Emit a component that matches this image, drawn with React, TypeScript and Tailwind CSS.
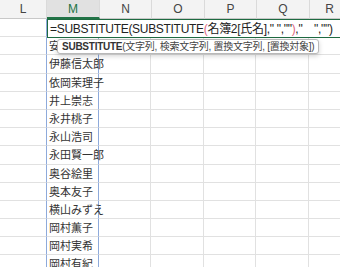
const cols = [
  { label: 'L', w: 'w-[47px]' },
  { label: 'M', w: 'w-[53px]' },
  { label: 'N', w: 'w-[52px]' },
  { label: 'O', w: 'w-[53px]' },
  { label: 'P', w: 'w-[52px]' },
  { label: 'Q', w: 'w-[53px]' },
  { label: 'R', w: 'w-[40px]' },
]

const names = [
  '安',
  '伊藤信太郎',
  '依岡茉理子',
  '井上崇志',
  '永井桃子',
  '永山浩司',
  '永田賢一郎',
  '奥谷絵里',
  '奥本友子',
  '横山みずえ',
  '岡村薫子',
  '岡村実希',
  '岡村有紀',
]

const font = { fontFamily: '"Liberation Sans", "Noto Sans CJK JP", sans-serif' }

function HeaderRow() {
  return (
    <div className="flex h-[19px] bg-[#f3f3f3]">
      {cols.map((c) => (
        <div
          key={c.label}
          className={`${c.w} shrink-0 flex items-center justify-center text-[12px] border-r border-[#dadada] ${
            c.label === 'M'
              ? 'bg-[#e1e1e1] text-[#217346] border-b-2 border-b-[#217346]'
              : 'text-[#444] border-b border-b-[#c8c8c8]'
          }`}
        >
          {c.label}
        </div>
      ))}
    </div>
  )
}

function GridRow({ name }: { name?: string }) {
  return (
    <div className="flex h-[18.2px]">
      {cols.map((c) => (
        <div
          key={c.label}
          className={`${c.w} shrink-0 border-b border-[#e1e1e1] ${
            c.label === 'M'
              ? 'relative border-x border-x-[#8eaadb] -ml-px'
              : 'border-r border-r-[#e1e1e1]'
          }`}
        >
          {c.label === 'M' && name && (
            <span className="absolute left-[2px] top-[1px] whitespace-nowrap text-[11px] leading-[16px] text-[#333]">
              {name}
            </span>
          )}
        </div>
      ))}
    </div>
  )
}

export default function App() {
  return (
    <div className="relative w-[340px] h-[267px] overflow-hidden bg-white" style={font}>
      <HeaderRow />
      <GridRow />
      {names.map((n, i) => (
        <GridRow key={i} name={n} />
      ))}

      <div className="absolute left-[47px] top-[19px] w-[300px] h-[19px] bg-white border border-[#1e6b41] flex items-center pl-[2px] whitespace-nowrap text-[12px] tracking-[-0.3px] text-[#222]">
        =SUBSTITUTE(SUBSTITUTE<span className="text-[#e0697f]">(</span>名簿2[氏名],&quot; &quot;,&quot;&quot;
        <span className="text-[#e0697f]">)</span>,&quot;　&quot;,&quot;&quot;)
      </div>

      <div className="absolute left-[57px] top-[39px] h-[15px] px-[4px] flex items-center rounded-[3px] bg-white border border-[#b9b9b9] shadow-[0_2px_5px_rgba(0,0,0,0.18)] whitespace-nowrap text-[10px] tracking-[-0.25px] text-[#444]">
        <span className="font-bold text-[#333]">SUBSTITUTE</span>(文字列, 検索文字列, 置換文字列, [置換対象])
      </div>
    </div>
  )
}
